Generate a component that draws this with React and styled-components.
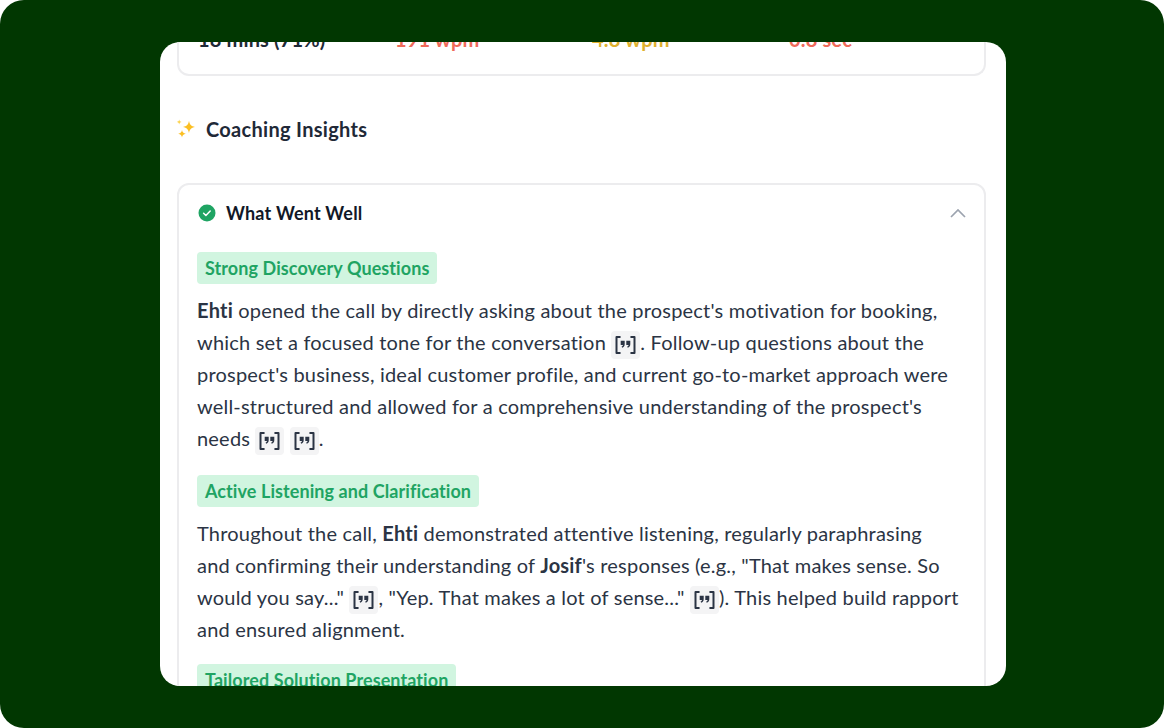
import React from "react";
import styled, { createGlobalStyle } from "styled-components";

const GlobalStyle = createGlobalStyle`
  html, body {
    margin: 0;
    padding: 0;
    background: #fff;
  }
  * {
    box-sizing: border-box;
  }
`;

const QuoteIcon = () => (
  <Cite>
    <svg width="21" height="20" viewBox="0 0 21 20" fill="none">
      <path d="M4.800 2H1.500v16h3.300M16.200 2h3.300v16h-3.300" stroke="#2b3444" strokeWidth="2" strokeLinecap="round" strokeLinejoin="round" />
      <path d="M5.700 5.800h4v3.400c0 1.800-1 3-2.600 3.500l-.5-1.300c.8-.3 1.300-.8 1.400-1.500H5.700zM11.300 5.800h4v3.400c0 1.800-1 3-2.600 3.500l-.5-1.300c.8-.3 1.300-.8 1.400-1.500h-2.300z" fill="#2b3444" />
    </svg>
  </Cite>
);

const App = () => {
  return (
    <Screen>
      <GlobalStyle />
      <Panel>
        <Content>
          <StatsCard>
            <StatCell $w="197px" $color="#1f2937">18 mins (71%)</StatCell>
            <StatCell $w="197px" $color="#ef6a5a">191 wpm</StatCell>
            <StatCell $w="197px" $color="#e0b12e">4.8 wpm</StatCell>
            <StatCell $w="160px" $color="#ef6a5a">0.8 sec</StatCell>
          </StatsCard>

          <SectionTitle>
            <svg width="20" height="20" viewBox="0 0 20 20">
              <path d="M13 1.800c.6 3.800 2.200 5.400 6 6.200-3.800.8-5.400 2.400-6 6.200-.6-3.800-2.200-5.400-6-6.200 3.800-.8 5.400-2.400 6-6.200z" fill="#fbbf24" />
              <path d="M3.200.6c.3 1.500.9 2.100 2.400 2.400-1.500.3-2.100.9-2.400 2.400C2.900 3.900 2.300 3.300.8 3 2.300 2.700 2.900 2.100 3.200.6z" fill="#fcd34d" />
              <path d="M6 11c.4 2.300 1.400 3.300 3.800 3.800C7.400 15.300 6.400 16.300 6 18.600c-.4-2.300-1.400-3.300-3.800-3.800C4.600 14.300 5.600 13.300 6 11z" fill="#fbbf24" />
            </svg>
            <TitleText>Coaching Insights</TitleText>
          </SectionTitle>

          <Accordion>
            <AccordionHead>
              <HeadLabel>
                <svg width="18" height="18" viewBox="0 0 18 18">
                  <circle cx="9" cy="9" r="8.500" fill="#1fa463" />
                  <path d="M5.600 9.200l2.300 2.300 4.300-4.500" fill="none" stroke="#fff" strokeWidth="1.500" strokeLinecap="round" strokeLinejoin="round" />
                </svg>
                <HeadText>What Went Well</HeadText>
              </HeadLabel>
              <svg width="16" height="10" viewBox="0 0 16 10" fill="none">
                <path d="M1 9l7-7 7 7" stroke="#9ca3af" strokeWidth="1.700" />
              </svg>
            </AccordionHead>

            <Insight $gap="21px">
              <Tag>Strong Discovery Questions</Tag>
              <Body>
                <b>Ehti</b> opened the call by directly asking about the prospect's motivation for booking,<br />
                which set a focused tone for the conversation <QuoteIcon />. Follow-up questions about the<br />
                prospect's business, ideal customer profile, and current go-to-market approach were<br />
                well-structured and allowed for a comprehensive understanding of the prospect's<br />
                needs <QuoteIcon /> <QuoteIcon />.
              </Body>
            </Insight>

            <Insight $gap="19px">
              <Tag>Active Listening and Clarification</Tag>
              <Body>
                Throughout the call, <b>Ehti</b> demonstrated attentive listening, regularly paraphrasing<br />
                and confirming their understanding of <b>Josif</b>'s responses (e.g., "That makes sense. So<br />
                would you say..." <QuoteIcon />, "Yep. That makes a lot of sense..." <QuoteIcon />). This helped build rapport<br />
                and ensured alignment.
              </Body>
            </Insight>

            <Insight $gap="19px">
              <Tag>Tailored Solution Presentation</Tag>
            </Insight>
          </Accordion>
        </Content>
      </Panel>
    </Screen>
  );
};
export default App;

const Screen = styled.div`
  width: 1164px;
  height: 728px;
  padding: 42px 158px 42px 160px;
  background-color: #013701;
  border-radius: 24px;
  font-family: "Lato", sans-serif;
`;
const Panel = styled.div`
  width: 846px;
  height: 644px;
  overflow: hidden;
  background-color: #fff;
  border-radius: 20px;
`;
const Content = styled.div`
  margin-top: -32px;
  padding: 0 20px 0 17px;
`;
const StatsCard = styled.div`
  height: 66px;
  padding: 15px 0 0 19px;
  display: flex;
  border: 2px solid #ececee;
  border-top: none;
  border-radius: 0 0 12px 12px;
`;
const StatCell = styled.div`
  width: ${(p) => p.$w};
  color: ${(p) => p.$color};
  font-size: 20px;
  font-weight: 700;
  line-height: 28px;
  letter-spacing: 0.15px;
`;
const SectionTitle = styled.div`
  height: 28px;
  margin: 39px 0 40px -1px;
  display: flex;
  align-items: center;
  gap: 10px;
`;
const TitleText = styled.div`
  color: #1f2937;
  font-size: 20px;
  font-weight: 700;
  letter-spacing: 0.3px;
`;
const Accordion = styled.div`
  padding: 0 18px 40px 18px;
  border: 2px solid #ececee;
  border-radius: 12px;
`;
const AccordionHead = styled.div`
  height: 56px;
  margin-bottom: 11px;
  display: flex;
  align-items: center;
  justify-content: space-between;
`;
const HeadLabel = styled.div`
  display: flex;
  align-items: center;
  gap: 10px;
  padding-left: 1px;
`;
const HeadText = styled.div`
  color: #111827;
  font-size: 18px;
  font-weight: 700;
  letter-spacing: 0.2px;
`;
const Insight = styled.div`
  margin-bottom: ${(p) => p.$gap};
`;
const Tag = styled.div`
  display: inline-block;
  height: 32px;
  padding: 0 8px;
  color: #1fa463;
  background-color: #d1f5e0;
  border-radius: 4px;
  font-size: 18px;
  font-weight: 700;
  line-height: 32px;
  letter-spacing: 0.08px;
  vertical-align: top;
`;
const Body = styled.div`
  margin-top: 10px;
  color: #2b3444;
  font-size: 20px;
  line-height: 32px;
  letter-spacing: 0.2px;
  white-space: nowrap;
  b {
    font-weight: 700;
  }
`;
const Cite = styled.span`
  display: inline-flex;
  align-items: center;
  justify-content: center;
  width: 29px;
  height: 28px;
  margin: -6px 0;
  vertical-align: middle;
  background-color: #f4f4f5;
  border-radius: 4px;
`;
